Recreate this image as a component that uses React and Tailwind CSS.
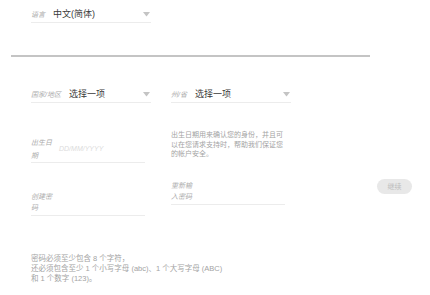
import React from 'react';

const font = { fontFamily: '"Liberation Sans", "Noto Sans CJK SC", sans-serif' };

function Caret() {
  return (
    <svg width="7" height="5" viewBox="0 0 7 5" className="shrink-0 mr-[1px]">
      <path d="M0 0 L7 0 L3.5 4.5 Z" fill="#c4c4c4" />
    </svg>
  );
}

function SelectField({ label, value }) {
  return (
    <div className="flex items-center h-[15px] border-b border-[#ececec] w-[120px] pb-[2px]">
      <span className="text-[7px] italic text-[#ababab] mr-[8px] leading-none">{label}</span>
      <span className="text-[9px] text-[#3a3a3a] leading-none flex-1">{value}</span>
      <Caret />
    </div>
  );
}

export default function App() {
  return (
    <div className="w-[430px] h-[295px] bg-white overflow-hidden relative" style={font}>
      {/* 语言 */}
      <div className="pt-[8px] pl-[31px]">
        <SelectField label="语言" value="中文(简体)" />
      </div>

      <div className="ml-[11px] w-[359px] h-[2px] bg-[#c4c4c4] mt-[32px]" />

      {/* 国家 / 州 */}
      <div className="flex gap-[20px] pl-[31px] mt-[31px]">
        <SelectField label="国家/地区" value="选择一项" />
        <SelectField label="州/省" value="选择一项" />
      </div>

      {/* 出生日期 */}
      <div className="flex items-start gap-[26px] pl-[31px] mt-[27px]">
        <div className="w-[114px] flex items-center border-b border-[#ececec] pt-[6px]">
          <span className="text-[7px] italic text-[#ababab] leading-[13px] w-[26px]">出生日期</span>
          <span className="text-[7px] italic text-[#dcdcdc] ml-[2px]">DD/MM/YYYY</span>
        </div>
        <p className="w-[118px] text-[7px] leading-[9.5px] text-[#a3a3a3]">
          出生日期用来确认您的身份，并且可以在您请求支持时，帮助我们保证您的帐户安全。
        </p>
      </div>

      {/* 密码 */}
      <div className="flex items-start gap-[26px] pl-[31px] mt-[17px]">
        <div className="w-[114px] mt-[11px] border-b border-[#ececec] pb-[2px]">
          <span className="block text-[7px] italic text-[#ababab] leading-[11px] w-[22px]">创建密码</span>
        </div>
        <div className="w-[114px] border-b border-[#ececec] pb-[2px]">
          <span className="block text-[7px] italic text-[#ababab] leading-[11px] w-[22px]">重新输入密码</span>
        </div>
        <button className="ml-[66px] -mt-[1px] w-[35px] h-[15px] rounded-full bg-[#e8e8e8] text-[7px] text-[#bdbdbd] leading-none">
          继续
        </button>
      </div>

      {/* 规则 */}
      <div className="pl-[31px] mt-[38px] text-[7.5px] leading-[10px] text-[#a3a3a3]">
        <p>密码必须至少包含 8 个字符，</p>
        <p>还必须包含至少 1 个小写字母 (abc)、1 个大写字母 (ABC)</p>
        <p>和 1 个数字 (123)。</p>
      </div>
    </div>
  );
}
